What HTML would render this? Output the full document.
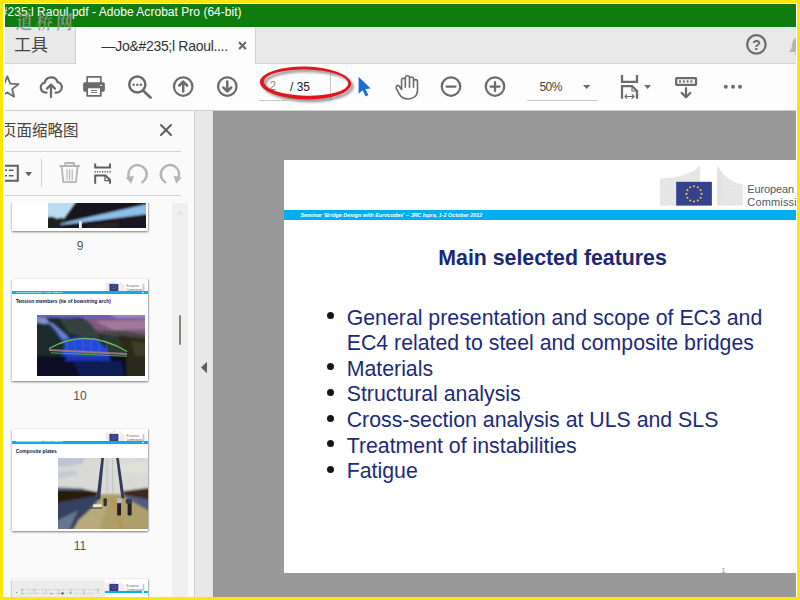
<!DOCTYPE html>
<html lang="zh">
<head>
<meta charset="utf-8">
<title>Adobe Acrobat Pro</title>
<style>
*{box-sizing:border-box;margin:0;padding:0}
html,body{width:800px;height:600px;overflow:hidden;background:#fbe60e}
body{position:relative;font-family:"Liberation Sans","Noto Sans CJK SC",sans-serif;color:#333}
.abs{position:absolute}
#win{position:absolute;left:3px;top:3px;width:794px;height:594px;background:#fff;overflow:hidden}
/* coordinates inside #app are page coordinates (app placed at -3,-3) */
#app{position:absolute;left:-3px;top:-3px;width:800px;height:600px}
#title{left:5px;top:4px;width:792px;height:23px;background:#107c10;color:#fff;font-size:12px;line-height:23px;white-space:nowrap;overflow:hidden;letter-spacing:0.030px}
#title span{position:absolute;left:0;top:-3.400px}
#tabbar{left:5px;top:27px;width:792px;height:37px;background:#e9e9e9;border-bottom:1px solid #d2d2d2}
#tooltab{left:5px;top:27px;width:71px;height:36px;background:#e9e9e9;border-right:1px solid #d0d0d0;font-size:17px;color:#444;line-height:36px}
#doctab{left:76px;top:27px;width:180px;height:37px;background:#fdfdfd;border-right:1px solid #d0d0d0;font-size:14px;color:#333}
#toolbar{left:5px;top:64px;width:792px;height:47px;background:#fdfdfd;border-bottom:1px solid #cfcfcf}
#panel{left:5px;top:111px;width:190px;height:489px;background:#fafafa;border-right:1px solid #cfcfcf}
#gutter{left:195px;top:111px;width:19px;height:489px;background:#e8e8e8;border-right:1px solid #939393}
#doc{left:214px;top:111px;width:582px;height:489px;background:#999}
#page{left:284px;top:160px;width:512px;height:413px;background:#fff}
.ico{position:absolute;overflow:visible}
.thumb{position:absolute;left:11.500px;width:136.600px;height:102px;background:#fff;box-shadow:0 1px 2px rgba(0,0,0,.5),1px 0 1px rgba(0,0,0,.12);overflow:hidden}
.thumb .bar{position:absolute;left:0;top:12px;width:137px;height:2.700px;background:#08adea}
.thumb .bar:after{content:"";position:absolute;left:130.800px;top:0.700px;width:1.700px;height:1.300px;background:#e8f6fc}
.thumb .bar span{position:absolute;left:4.400px;top:0.500px;font-size:1.400px;line-height:1.700px;font-weight:bold;font-style:italic;color:#fff;white-space:nowrap}
.thumb .tt{position:absolute;left:4.200px;top:18.800px;font-size:4.950px;line-height:7px;font-weight:bold;color:#0c1250;white-space:nowrap}
.thumb svg{position:absolute}
.tlabel{position:absolute;left:60px;width:40px;text-align:center;font-size:12px;line-height:14px;color:#555}
.mlogo{position:absolute;left:93px;top:0}
#page{overflow:hidden}
#page .bar{position:absolute;left:0;top:50px;width:520px;height:10px;background:#00aeef}
#page .bar span{position:absolute;left:16.500px;top:1.800px;font-size:5.400px;line-height:7px;font-weight:bold;font-style:italic;color:#fff;white-space:nowrap;letter-spacing:0.010px}
#page h1{position:absolute;left:154.300px;top:84.200px;font-size:21.300px;line-height:28px;font-weight:bold;color:#1a2975;white-space:nowrap}
#page ul{position:absolute;left:62.700px;top:145.600px;list-style:none;font-size:21.300px;line-height:25.600px;color:#1c2b78;white-space:nowrap}
#page li{position:relative}
#page li:before{content:"";position:absolute;left:-19.700px;top:6.700px;width:7px;height:7px;border-radius:50%;background:#15151f}

</style>
</head>
<body>
<div id="win"><div id="app">

<!-- title bar -->
<div id="title" class="abs"><span style="left:-4.200px">#235;l Raoul.pdf - Adobe Acrobat Pro (64-bit)</span></div>

<!-- tab bar -->
<div id="tabbar" class="abs"></div>
<div id="tooltab" class="abs"><span class="abs" style="left:9px;top:1px">工具</span></div>
<div id="doctab" class="abs">
  <span class="abs" style="left:25.500px;top:11px;white-space:nowrap;letter-spacing:-0.300px">—Jo&amp;#235;l Raoul....</span>
</div>

<span class="abs" style="left:16px;top:10px;font-family:'Liberation Serif','Noto Serif CJK SC',serif;font-size:19.600px;line-height:26px;letter-spacing:3.900px;color:rgba(152,152,152,0.920);white-space:nowrap;font-weight:600;transform-origin:0 50%;transform:scaleX(0.850) skewX(-3deg)">道桥网</span>
<!-- toolbar -->
<div id="toolbar" class="abs"></div>
<div class="abs" style="left:259px;top:100px;width:28px;height:1px;background:#c8c8c8"></div>
<div class="abs" style="left:330px;top:73px;width:1px;height:28px;background:#c8c8c8"></div>
<span class="abs" style="left:269.5px;top:79px;font-size:12px;line-height:14px;color:#8a8a8a">2</span>
<span class="abs" style="left:290px;top:80px;font-size:12px;line-height:14px;color:#222;white-space:nowrap">/ 35</span>
<span class="abs" style="left:539.500px;top:80px;font-size:12px;line-height:14px;color:#444;letter-spacing:-0.6px">50%</span>
<div class="abs" style="left:527px;top:100px;width:71px;height:1px;background:#c8c8c8"></div>

<!-- left panel -->
<div id="panel" class="abs"></div>
<div id="gutter" class="abs"></div>
<span class="abs" style="left:1px;top:119.500px;font-size:15.500px;line-height:22px;color:#444;white-space:nowrap">页面缩略图</span>
<div class="abs" style="left:5px;top:151px;width:176px;height:1px;background:#d2d2d2"></div>
<div class="abs" style="left:5px;top:195px;width:176px;height:1px;background:#d2d2d2"></div>
<div class="abs" style="left:41px;top:159px;width:1px;height:28px;background:#cfcfcf"></div>
<div class="abs" style="left:172px;top:203px;width:16px;height:397px;background:#f0f0f0"></div>
<div class="abs" style="left:179px;top:315px;width:2px;height:30px;background:#85837c;border-radius:1px"></div>

<!-- thumbnails -->
<div class="abs" style="left:5px;top:203px;width:167px;height:397px;overflow:hidden">
 <div class="thumb" style="left:6.500px;top:-74px">
  <svg style="left:36.600px;top:36px" width="98" height="63" viewBox="0 0 98 63">
   <rect width="98" height="63" fill="#b9dcf1"/>
   <g filter="url(#bl)">
   <polygon points="-3,53 4,52 9,54 14,53 20,57 20,66 -3,66" fill="#1e2024"/>
   <polygon points="29,36 101,36 101,39.500 14,58.500 12,60" fill="#18131e"/>
   <polygon points="13,58.600 101,38.800 101,48.800 32,57.600 13,60" fill="#8cc0ea"/>
   <polygon points="13,60 32,57.600 101,48.800 101,66 13,66" fill="#1a1220"/>
   <polygon points="40,60 70,57 70,62 40,63" fill="#2c2226"/>
   </g>
   <rect x="31" y="56.400" width="2.800" height="7" fill="#f4f4f4"/>
  </svg>
 </div>
 <div class="thumb" style="left:6.500px;top:76px">
  <svg class="mlogo" width="44" height="12.500" viewBox="0 -2.500 44 12.500"><path d="M0.600 1.300 C4 1 8 0 10.400 -2.100 V9.500 H0.600 Z" fill="#ececec"/><path d="M14.500 -2.100 C15.500 0.500 17.500 2.800 20.100 3.500 V9.500 H14.500 Z" fill="#eeeeee"/><rect x="4.400" y="2.400" width="9" height="7.100" fill="#303c8c"/><circle cx="8.900" cy="5.600" r="1.900" fill="none" stroke="#d8b848" stroke-width="0.600" stroke-dasharray="0.500 0.500"/><text x="21.500" y="5.500" font-size="2.900" fill="#6a6e6e" font-family="Liberation Sans, sans-serif">European</text><text x="21.500" y="9.300" font-size="2.900" fill="#5a6060" font-family="Liberation Sans, sans-serif">Commission</text><rect x="37.600" y="2.400" width="1.800" height="7.100" fill="#a8d4f0"/></svg>
  <div class="bar"><span>Seminar 'Bridge Design with Eurocodes' – JRC Ispra, 1-2 October 2012</span></div>
  <div class="tt">Tension members (tie of bowstring arch)</div>
  <svg style="left:25.400px;top:35.800px" width="108" height="61" viewBox="0 0 108 61" preserveAspectRatio="none">
   <defs><filter id="bl" x="-10%" y="-10%" width="120%" height="120%"><feGaussianBlur stdDeviation="0.900"/></filter></defs>
   <rect width="108" height="61" fill="#1d2a2e"/>
   <g filter="url(#bl)">
   <rect x="-4" y="-3" width="116" height="6" fill="#6a5fc6"/>
   <polygon points="70,-2 112,-2 112,4 80,3" fill="#9585d2"/>
   <polygon points="46,3 112,3 112,23 84,22 62,18 52,11" fill="#83587e"/>
   <polygon points="58,6 112,5 112,14 76,15" fill="#a07a9c"/>
   <polygon points="56,15 90,16 112,20 112,24 80,22" fill="#4a4a48"/>
   <polygon points="-2,2 9,3 14,9 4,9 -2,7" fill="#7f8fd2"/>
   <polygon points="10,7 16,8 30,20 34,26 26,26 18,15" fill="#5f7fd6"/>
   <polygon points="27,24 44,22 60,24 70,34 73,42 25,42 27,32" fill="#2648dc"/>
   <polygon points="-2,8 8,9 20,20 27,30 24,42 -2,44" fill="#1f2c2e"/>
   <polygon points="22,3 50,5 58,14 64,23 44,21 32,18" fill="#35433f"/>
   <polygon points="64,20 84,22 92,30 92,40 72,38" fill="#2c3830"/>
   <rect x="-2" y="41" width="112" height="22" fill="#0a0828"/>
   <polygon points="36,47 84,46 88,63 44,63" fill="#101a54"/>
   <polygon points="30,41 72,41 74,46 28,46" fill="#1c36b4"/>
   <polygon points="80,20 112,24 112,63 90,63 89,38" fill="#2a2c1a"/>
   <polygon points="94,26 112,28 112,42 98,40" fill="#413c28"/>
   </g>
   <path d="M12 33.500 Q50 12 90 36.500" fill="none" stroke="#6cbc40" stroke-width="1.400"/>
   <path d="M30 27 V35.500 M38 24.500 V36 M46 23 V36.500 M54 23 V37 M62 24.500 V37 M70 27.500 V37.500" stroke="#5a78e0" stroke-width="0.500" opacity="0.800"/>
   <path d="M12 35 L90 39" fill="none" stroke="#94787e" stroke-width="1.800"/>
   <path d="M14 37.800 L90 41.300" fill="none" stroke="#52a83c" stroke-width="1"/>
  </svg>
 </div>
 <div class="thumb" style="left:6.500px;top:225.900px">
  <svg class="mlogo" width="44" height="12.500" viewBox="0 -2.500 44 12.500"><path d="M0.600 1.300 C4 1 8 0 10.400 -2.100 V9.500 H0.600 Z" fill="#ececec"/><path d="M14.500 -2.100 C15.500 0.500 17.500 2.800 20.100 3.500 V9.500 H14.500 Z" fill="#eeeeee"/><rect x="4.400" y="2.400" width="9" height="7.100" fill="#303c8c"/><circle cx="8.900" cy="5.600" r="1.900" fill="none" stroke="#d8b848" stroke-width="0.600" stroke-dasharray="0.500 0.500"/><text x="21.500" y="5.500" font-size="2.900" fill="#6a6e6e" font-family="Liberation Sans, sans-serif">European</text><text x="21.500" y="9.300" font-size="2.900" fill="#5a6060" font-family="Liberation Sans, sans-serif">Commission</text><rect x="37.600" y="2.400" width="1.800" height="7.100" fill="#a8d4f0"/></svg>
  <div class="bar"><span>Seminar 'Bridge Design with Eurocodes' – JRC Ispra, 1-2 October 2012</span></div>
  <div class="tt">Composite plates</div>
  <svg style="left:46.700px;top:29.100px" width="90.300" height="71.500" viewBox="0 0 90 71" preserveAspectRatio="none">
   <rect width="90" height="71" fill="#d8d9d6"/>
   <g filter="url(#bl)">
   <rect x="-5" y="-5" width="100" height="38" fill="#d9dad7"/>
   <polygon points="-5,-5 30,-5 24,6 6,9 -5,8" fill="#bcc6d4"/>
   <polygon points="-5,14 14,12 22,16 4,20 -5,19" fill="#c3cad4"/>
   <polygon points="50,6 95,4 95,14 64,15" fill="#e1e1da"/>
   <polygon points="-5,29 24,30 30,32 -5,33" fill="#56687a"/>
   <polygon points="-5,32 30,32 41,34 41,40 -5,48" fill="#2a1a0e"/>
   <polygon points="64,33 95,29 95,46 68,40" fill="#3a2a1a"/>
   <polygon points="39,36 63,36 95,54 95,76 8,76" fill="#ad9e6a"/>
   <polygon points="-5,45 41,37 41,41 10,76 -5,76" fill="#34425f"/>
   <polygon points="-5,64 20,52 9,76 -5,76" fill="#66768c"/>
   <polygon points="63,36 95,42 95,55 70,41" fill="#4d5c80"/>
   <polygon points="20,62 40,44 50,44 40,76 14,76" fill="#b8aa7c"/>
   </g>
   <path d="M54 41 L58 52 L64 71" fill="none" stroke="#c6863a" stroke-width="2.200" stroke-dasharray="2 1.200" filter="url(#bl)"/>
   <polygon points="43.200,0 45.800,0 42,41 38.200,41" fill="#333a5a"/>
   <polygon points="58,0 60.600,0 66.300,40 63.200,40" fill="#333a5a"/>
   <path d="M49 0 V36 M54.500 0 V36" stroke="#a8aab0" stroke-width="0.500"/>
   <rect x="59" y="44" width="3.800" height="13" rx="1.200" fill="#1e1c28"/>
   <rect x="58.600" y="40" width="5" height="5" rx="1.500" fill="#b4b6c8"/>
   <rect x="69.400" y="43" width="4" height="14" rx="1.200" fill="#24202a"/>
   <rect x="67.500" y="40.500" width="6" height="5" rx="1.500" fill="#3a3a44"/>
   <rect x="45.300" y="40" width="3.400" height="8" rx="1" fill="#3a3030"/>
   <rect x="35" y="46" width="8.500" height="3.600" fill="#ebe7dc"/>
   <rect x="32" y="49" width="12" height="1.200" fill="#4a4438"/>
  </svg>
 </div>
 <div class="thumb" style="left:6.500px;top:375.600px">
  <svg class="mlogo" width="44" height="12.500" viewBox="0 -2.500 44 12.500"><path d="M0.600 1.300 C4 1 8 0 10.400 -2.100 V9.500 H0.600 Z" fill="#ececec"/><path d="M14.500 -2.100 C15.500 0.500 17.500 2.800 20.100 3.500 V9.500 H14.500 Z" fill="#eeeeee"/><rect x="4.400" y="2.400" width="9" height="7.100" fill="#303c8c"/><circle cx="8.900" cy="5.600" r="1.900" fill="none" stroke="#d8b848" stroke-width="0.600" stroke-dasharray="0.500 0.500"/><text x="21.500" y="5.500" font-size="2.900" fill="#6a6e6e" font-family="Liberation Sans, sans-serif">European</text><text x="21.500" y="9.300" font-size="2.900" fill="#5a6060" font-family="Liberation Sans, sans-serif">Commission</text><rect x="37.600" y="2.400" width="1.800" height="7.100" fill="#a8d4f0"/></svg>
  <div class="bar"><span>Seminar 'Bridge Design with Eurocodes' – JRC Ispra, 1-2 October 2012</span></div>
  <svg style="left:0;top:0" width="93" height="20" viewBox="0 0 93 20"><rect x="0" y="1.200" width="93" height="19" fill="#ececec"/><path d="M9 10.600 H90 M10 14.300 H84" stroke="#b4b8b4" stroke-width="0.700" stroke-dasharray="3 1.200 1 1.500"/><path d="M10 9 V16 M22 9.500 V15 M34 10 V15 M47 10 V16 M59 10 V15 M72 10 V16 M86 9 V15" stroke="#a8aca8" stroke-width="0.600"/><rect x="49.500" y="13.500" width="2" height="1.800" fill="#303030"/><rect x="39" y="14" width="1.200" height="1.200" fill="#707070"/><rect x="4" y="13" width="1" height="1" fill="#50a050"/><rect x="58" y="13" width="1" height="1" fill="#50a050"/></svg>
 </div>
 <div class="tlabel" style="left:55px;top:35.500px">9</div>
 <div class="tlabel" style="left:55px;top:185.500px">10</div>
 <div class="tlabel" style="left:55px;top:336px">11</div>
</div>

<!-- document area -->
<div id="doc" class="abs"></div>
<div class="abs" style="left:283.500px;top:160px;width:1px;height:413px;background:#fff"></div>
<div id="page" class="abs">
 <div class="bar"><span>Seminar 'Bridge Design with Eurocodes' – JRC Ispra, 1-2 October 2012</span></div>
 <svg class="abs" style="left:375px;top:4px" width="140" height="42" viewBox="659 164 140 42">
  <defs>
   <pattern id="st1" width="4" height="1.600" patternUnits="userSpaceOnUse"><rect width="4" height="1.600" fill="#f0f0f0"/><rect y="0.900" width="4" height="0.600" fill="#dcdcdc"/></pattern>
  </defs>
  <clipPath id="cl1"><path d="M660 178.200 C680 177 694 173 700.200 164.800 V205.600 H660 Z"/></clipPath>
  <clipPath id="cl2"><path d="M717.200 164.800 C722 174 730 182 742.800 184 V205.600 H717.200 Z"/></clipPath>
  <g clip-path="url(#cl1)"><rect x="659" y="164" width="42" height="42" fill="#f1f1f1"/><g fill="none" stroke="#d6d6d6" stroke-width="0.700"><path d="M660 179.95 C680 178.75 694 174.75 700.200 166.55"/><path d="M660 181.70 C680 180.50 694 176.50 700.200 168.30"/><path d="M660 183.45 C680 182.25 694 178.25 700.200 170.05"/><path d="M660 185.20 C680 184.00 694 180.00 700.200 171.80"/><path d="M660 186.95 C680 185.75 694 181.75 700.200 173.55"/><path d="M660 188.70 C680 187.50 694 183.50 700.200 175.30"/><path d="M660 190.45 C680 189.25 694 185.25 700.200 177.05"/><path d="M660 192.20 C680 191.00 694 187.00 700.200 178.80"/><path d="M660 193.95 C680 192.75 694 188.75 700.200 180.55"/><path d="M660 195.70 C680 194.50 694 190.50 700.200 182.30"/><path d="M660 197.45 C680 196.25 694 192.25 700.200 184.05"/><path d="M660 199.20 C680 198.00 694 194.00 700.200 185.80"/><path d="M660 200.95 C680 199.75 694 195.75 700.200 187.55"/><path d="M660 202.70 C680 201.50 694 197.50 700.200 189.30"/><path d="M660 204.45 C680 203.25 694 199.25 700.200 191.05"/><path d="M660 206.20 C680 205.00 694 201.00 700.200 192.80"/><path d="M660 207.95 C680 206.75 694 202.75 700.200 194.55"/><path d="M660 209.70 C680 208.50 694 204.50 700.200 196.30"/><path d="M660 211.45 C680 210.25 694 206.25 700.200 198.05"/><path d="M660 213.20 C680 212.00 694 208.00 700.200 199.80"/><path d="M660 214.95 C680 213.75 694 209.75 700.200 201.55"/><path d="M660 216.70 C680 215.50 694 211.50 700.200 203.30"/><path d="M660 218.45 C680 217.25 694 213.25 700.200 205.05"/><path d="M660 220.20 C680 219.00 694 215.00 700.200 206.80"/><path d="M660 221.95 C680 220.75 694 216.75 700.200 208.55"/></g></g>
  <g clip-path="url(#cl2)"><rect x="717" y="164" width="26" height="42" fill="#f1f1f1"/><g fill="none" stroke="#d6d6d6" stroke-width="0.700"><path d="M717.200 166.55 C722 175.75 730 183.75 742.800 185.75"/><path d="M717.200 168.30 C722 177.50 730 185.50 742.800 187.50"/><path d="M717.200 170.05 C722 179.25 730 187.25 742.800 189.25"/><path d="M717.200 171.80 C722 181.00 730 189.00 742.800 191.00"/><path d="M717.200 173.55 C722 182.75 730 190.75 742.800 192.75"/><path d="M717.200 175.30 C722 184.50 730 192.50 742.800 194.50"/><path d="M717.200 177.05 C722 186.25 730 194.25 742.800 196.25"/><path d="M717.200 178.80 C722 188.00 730 196.00 742.800 198.00"/><path d="M717.200 180.55 C722 189.75 730 197.75 742.800 199.75"/><path d="M717.200 182.30 C722 191.50 730 199.50 742.800 201.50"/><path d="M717.200 184.05 C722 193.25 730 201.25 742.800 203.25"/><path d="M717.200 185.80 C722 195.00 730 203.00 742.800 205.00"/><path d="M717.200 187.55 C722 196.75 730 204.75 742.800 206.75"/><path d="M717.200 189.30 C722 198.50 730 206.50 742.800 208.50"/><path d="M717.200 191.05 C722 200.25 730 208.25 742.800 210.25"/><path d="M717.200 192.80 C722 202.00 730 210.00 742.800 212.00"/><path d="M717.200 194.55 C722 203.75 730 211.75 742.800 213.75"/><path d="M717.200 196.30 C722 205.50 730 213.50 742.800 215.50"/><path d="M717.200 198.05 C722 207.25 730 215.25 742.800 217.25"/><path d="M717.200 199.80 C722 209.00 730 217.00 742.800 219.00"/><path d="M717.200 201.55 C722 210.75 730 218.75 742.800 220.75"/><path d="M717.200 203.30 C722 212.50 730 220.50 742.800 222.50"/><path d="M717.200 205.05 C722 214.25 730 222.25 742.800 224.25"/><path d="M717.200 206.80 C722 216.00 730 224.00 742.800 226.00"/><path d="M717.200 208.55 C722 217.75 730 225.75 742.800 227.75"/></g></g>
  <rect x="676.200" y="181.800" width="35.700" height="23.800" fill="#34418f"/>
  <g fill="#f1c43c">
   <circle cx="694" cy="186.300" r="1.050"/><circle cx="697.800" cy="187.300" r="1.050"/><circle cx="700.600" cy="190.100" r="1.050"/><circle cx="701.600" cy="193.900" r="1.050"/><circle cx="700.600" cy="197.700" r="1.050"/><circle cx="697.800" cy="200.500" r="1.050"/><circle cx="694" cy="201.500" r="1.050"/><circle cx="690.200" cy="200.500" r="1.050"/><circle cx="687.400" cy="197.700" r="1.050"/><circle cx="686.400" cy="193.900" r="1.050"/><circle cx="687.400" cy="190.100" r="1.050"/><circle cx="690.200" cy="187.300" r="1.050"/>
  </g>
 </svg>
 <div class="abs" style="left:463px;top:20px;width:49px;height:25.600px;overflow:hidden;font-size:11px;line-height:12px;color:#4d5962;white-space:nowrap;letter-spacing:-0.120px"><span class="abs" style="left:0.300px;top:3.100px">European</span><span class="abs" style="left:0.300px;top:15.800px;letter-spacing:0.160px">Commission</span></div>
 <h1>Main selected features</h1>
 <ul>
  <li>General presentation and scope of EC3 and<br>EC4 related to steel and composite bridges</li>
  <li>Materials</li>
  <li>Structural analysis</li>
  <li>Cross-section analysis at ULS and SLS</li>
  <li>Treatment of instabilities</li>
  <li>Fatigue</li>
 </ul>
 <span class="abs" style="left:437.500px;top:406.500px;font-size:7px;line-height:8px;color:#8a8a8a">1</span>
</div>


<!-- icon overlay -->
<svg class="abs" style="left:0;top:0" width="800" height="600" viewBox="0 0 800 600" fill="none" stroke-linecap="round" stroke-linejoin="round">
 <g id="tb" stroke="#6b6b6b" stroke-width="2.250">
  <!-- star -->
  <polygon stroke-width="1.800" points="7.3,76.3 10.2,83.6 18.6,84.1 12.2,89.1 14.1,96.7 7.3,92.5 0.7,96.7 2.6,89.1 -3.4,84.1 4.4,83.6"/>
  <!-- cloud upload -->
  <path d="M46.5 92.5 H45.5 A5 5 0 0 1 44.8 82.6 A6.6 6.6 0 0 1 57.6 82.2 A5.2 5.2 0 0 1 56.5 92.5 H55.5"/>
  <path d="M51 97 V85 M47 88.6 L51 84.6 L55 88.6"/>
  <!-- printer -->
  <g stroke="none" fill="#6b6b6b">
   <path fill-rule="evenodd" d="M87.100 76.100 h13.800 a0.800 0.800 0 0 1 0.800 0.800 v7.100 h-15.400 v-7.100 a0.800 0.800 0 0 1 0.800 -0.800 z M88 77.800 v6.200 h12 v-6.200 z"/>
   <rect x="83.100" y="82.300" width="21.800" height="9.400" rx="1.600"/>
   <rect x="86.300" y="87.900" width="15.400" height="8.800" rx="0.800"/>
   <rect x="88" y="88.300" width="12" height="6.700" fill="#fdfdfd"/>
   <rect x="91" y="90" width="6" height="0.900"/><rect x="91" y="92" width="6" height="0.900"/>
   <rect x="100.100" y="85" width="2" height="1" fill="#fdfdfd"/>
  </g>
  <!-- magnifier -->
  <circle cx="137.300" cy="84.500" r="8.050" stroke-width="2.500"/>
  <path d="M143.500 91 L150.500 97.500" stroke-width="2.700"/>
  <g fill="#6b6b6b" stroke="none"><circle cx="133.700" cy="84.700" r="1.250"/><circle cx="137.300" cy="84.700" r="1.250"/><circle cx="140.900" cy="84.700" r="1.250"/></g>
  <!-- up circle -->
  <circle cx="183.200" cy="86.500" r="9.250"/>
  <path stroke-width="2.500" d="M183.200 91.500 V82 M179.300 85.500 L183.200 81.600 L187.100 85.500"/>
  <!-- down circle -->
  <circle cx="227.300" cy="86.500" r="9.250"/>
  <path stroke-width="2.500" d="M227.300 81.500 V91 M223.400 87.500 L227.300 91.400 L231.200 87.500"/>
  <!-- zoom out -->
  <circle cx="451" cy="86.500" r="9.250"/>
  <path d="M446.500 86.500 H455.500"/>
  <!-- zoom in -->
  <circle cx="495" cy="86.500" r="9.250"/>
  <path d="M490.500 86.500 H499.500 M495 82 V91"/>
  <!-- hand -->
  <path stroke-width="1.600" d="M401.600 89.500 V80.150 a1.850 1.850 0 0 1 3.700 0 V87.300 M405.300 87.300 V77.800 a2.100 2.100 0 0 1 4.200 0 V87.300 M409.500 87.300 V79 a2 2 0 0 1 4 0 V87.300 M413.500 87.300 V81.600 a2 2 0 0 1 4 0 V90.500 C417.500 95.800 413.200 99 408 99 C403.500 99 401 97 399.200 94 L396.400 88.600 C395.200 86.200 397.600 84.400 399.300 86.200 L401.600 89.500"/>
  <!-- dropdown triangles -->
  <path d="M583 85 h7.400 l-3.700 4 z" fill="#6b6b6b" stroke="none"/>
  <path d="M644.200 85 h6.800 l-3.400 4 z" fill="#6b6b6b" stroke="none"/>
  <!-- fit width -->
  <path stroke-linecap="butt" stroke-linejoin="miter" d="M622 75 V81.800 H637 V75"/>
  <path stroke-linecap="butt" stroke-linejoin="miter" d="M622 98.800 V86 H632 L637 91 V98.800"/>
  <path stroke-width="1.200" stroke-linecap="butt" stroke-linejoin="miter" d="M632 86.500 V91 H636.500"/>
  <path stroke-width="1.200" d="M625 96.500 H634 M626.800 94.700 L625 96.500 L626.800 98.300 M632.200 94.700 L634 96.500 L632.200 98.300"/>
  <!-- keyboard down -->
  <rect x="676.200" y="78" width="19.800" height="6.800" rx="0.500"/>
  <g fill="#6b6b6b" stroke="none"><rect x="679" y="80.300" width="2" height="2.300"/><rect x="682.800" y="80.300" width="2" height="2.300"/><rect x="686.600" y="80.300" width="2" height="2.300"/><rect x="690.400" y="80.300" width="2" height="2.300"/></g>
  <path d="M686 88 V97 M681.700 93 L686 97.300 L690.300 93"/>
  <!-- more dots -->
  <g fill="#6b6b6b" stroke="none"><circle cx="725.800" cy="86.800" r="2"/><circle cx="733" cy="86.800" r="2"/><circle cx="740" cy="86.800" r="2"/></g>
  <!-- help -->
  <circle cx="756.400" cy="44.400" r="9.250"/>
 </g>

 <!-- panel icons -->
 <g stroke="#5f5f5f" stroke-width="2">
  <path d="M161 125 L171 135 M171 125 L161 135"/>
  <path stroke-width="2.100" stroke="#666" d="M239.600 42.700 L245.300 48.400 M245.300 42.700 L239.600 48.400"/>
  <path stroke-linecap="butt" stroke-linejoin="miter" d="M3 165.800 H17.800 V180.700 H3"/>
  <path stroke-width="1.600" stroke-linecap="butt" d="M5 170.300 H7 M8.800 170.300 H13.500 M5 175.800 H7 M8.800 175.800 H13.500"/>
  <path d="M25.200 172 h6.800 l-3.400 4.200 z" fill="#5f5f5f" stroke="none"/>
  <path d="M201 367.500 L207 361.700 V373.300 Z" fill="#5f5f5f" stroke="none"/>
  <!-- page break -->
  <path stroke-linecap="butt" stroke-linejoin="miter" d="M95.200 163.500 V167.500 H110 V163.500"/>
  <path stroke-width="1.400" stroke-linecap="butt" stroke-dasharray="1.300 1.200" d="M94.500 171.700 H111"/>
  <path stroke-linecap="butt" stroke-linejoin="miter" d="M95.200 183.700 V175.500 H105.500 L110 180 V183.700"/>
  <path stroke-width="1.300" stroke-linecap="butt" stroke-linejoin="miter" d="M105 175.500 V180.600 H110"/>
 </g>
 <g stroke="#b4b4b4" stroke-width="1.800">
  <!-- trash -->
  <path d="M60 166 H79.200 M65.200 165.500 V163 H74 V165.500"/>
  <path d="M61.800 167 L63.300 182.200 H76 L77.500 167"/>
  <path stroke-width="1.100" d="M67 169.500 V180 M69.600 169.500 V180 M72.200 169.500 V180"/>
  <!-- rotate ccw -->
  <path stroke-width="2.500" d="M129.800 179.300 A9.200 9.200 0 1 1 142.300 182.200"/>
  <path d="M125.800 177.600 L134 175.800 L131.200 183.800 Z" fill="#b4b4b4" stroke="none"/>
  <!-- rotate cw -->
  <path stroke-width="2.500" d="M177.700 179.300 A9.200 9.200 0 1 0 165.200 182.200"/>
  <path d="M181.700 177.600 L173.500 175.800 L176.300 183.800 Z" fill="#b4b4b4" stroke="none"/>
 </g>
 <path d="M176 215 l4.500 -5 l4.500 5 z" fill="#e6e6e6"/>
 <!-- bell (partial) -->
 <path d="M788.800 52 c2.300 -1.700 2.900 -4.200 3.300 -8 c0.400 -3.900 1.900 -6 5.900 -6.600 V52 z" fill="#b3b5b7"/><circle cx="795.400" cy="53.600" r="0.700" fill="#9a9a9a"/>
 <!-- cursor arrow -->
 <path d="M358.600 76.800 L358.600 93.800 L362.600 90.200 L365.600 96.400 L368.400 95 L365.400 89 L370.600 88.600 Z" fill="#1e6dd2"/>
 <!-- red ellipse with shadow -->
 <g transform="rotate(1.300 305.500 83)">
  <path fill-rule="evenodd" fill="#555" fill-opacity="0.620" style="filter:blur(1.200px)" transform="translate(2.600 2.600)" d="M259.800 83 a45.700 16.400 0 1 0 91.400 0 a45.700 16.400 0 1 0 -91.400 0 z M263.700 82.600 a42.300 13.100 0 1 0 84.600 0 a42.300 13.100 0 1 0 -84.600 0 z"/>
  <path fill-rule="evenodd" fill="#e2141c" d="M259.800 83 a45.700 16.400 0 1 0 91.400 0 a45.700 16.400 0 1 0 -91.400 0 z M263.700 82.600 a42.300 13.100 0 1 0 84.600 0 a42.300 13.100 0 1 0 -84.600 0 z"/>
 </g>
</svg>
<span class="abs" style="left:752.200px;top:37px;font-size:14px;font-weight:bold;line-height:16px;color:#6b6b6b">?</span>

<div class="abs" style="left:3px;top:3px;width:2px;height:594px;background:#fff"></div>
<div class="abs" style="left:3px;top:3px;width:794px;height:1px;background:#fff"></div>
<div class="abs" style="left:796px;top:3px;width:1px;height:594px;background:#fff"></div>
</div></div>
</body>
</html>
